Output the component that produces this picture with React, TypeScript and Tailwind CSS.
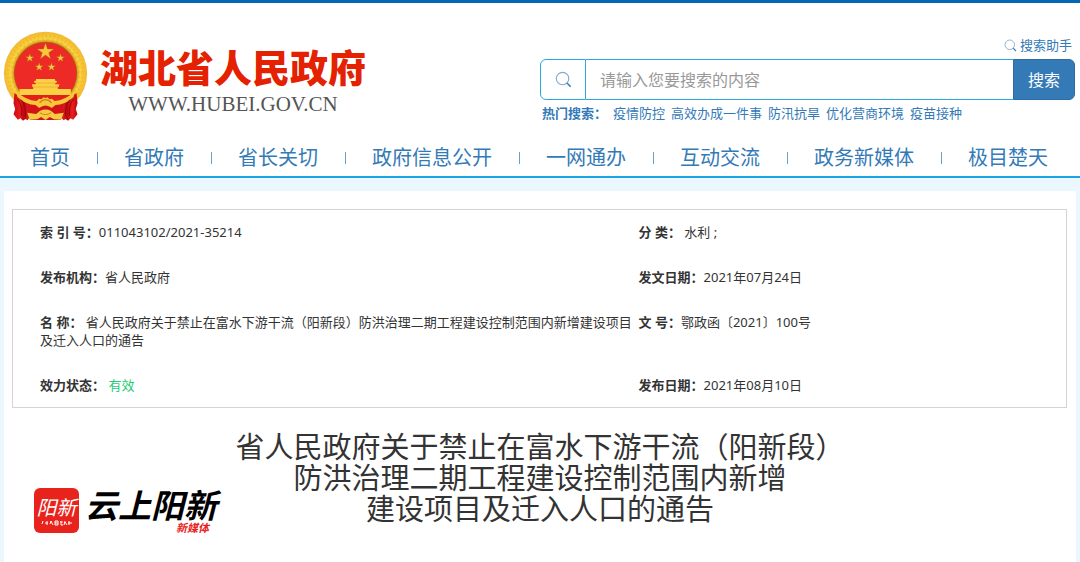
import React from "react";

const NAV = ["首页", "省政府", "省长关切", "政府信息公开", "一网通办", "互动交流", "政务新媒体", "极目楚天"];
const HOT = ["疫情防控", "高效办成一件事", "防汛抗旱", "优化营商环境", "疫苗接种"];

type Field = { label: string; value: string; valid?: boolean };

const FIELDS: Field[] = [
  { label: "索 引 号：", value: "011043102/2021-35214" },
  { label: "分 类：", value: " 水利 ;" },
  { label: "发布机构：", value: "省人民政府" },
  { label: "发文日期：", value: "2021年07月24日" },
  {
    label: "名 称：",
    value: " 省人民政府关于禁止在富水下游干流（阳新段）防洪治理二期工程建设控制范围内新增建设项目及迁入人口的通告",
  },
  { label: "文 号：", value: "鄂政函〔2021〕100号" },
  { label: "效力状态：", value: " 有效", valid: true },
  { label: "发布日期：", value: "2021年08月10日" },
];

function starPoints(cx: number, cy: number, r: number) {
  return Array.from({ length: 10 }, (_, i) => {
    const radius = i % 2 ? r * 0.39 : r;
    const a = (Math.PI / 5) * i - Math.PI / 2;
    return `${cx + radius * Math.cos(a)},${cy + radius * Math.sin(a)}`;
  }).join(" ");
}

function Emblem() {
  return (
    <svg viewBox="9 31 254 270" className="h-[90px] w-[85px] shrink-0" aria-hidden="true">
      <defs>
        <radialGradient id="ring" gradientUnits="userSpaceOnUse" cx="136" cy="158" r="126">
          <stop offset="0.74" stopColor="#d99a1c" />
          <stop offset="0.84" stopColor="#f8cf3c" />
          <stop offset="0.93" stopColor="#f6c030" />
          <stop offset="1" stopColor="#f0b83a" />
        </radialGradient>
        <linearGradient id="drape" x1="0" x2="1" y1="0" y2="0">
          <stop offset="0" stopColor="#c80d12" />
          <stop offset="0.3" stopColor="#e81c1c" />
          <stop offset="0.5" stopColor="#b8080e" />
          <stop offset="0.75" stopColor="#ea2020" />
          <stop offset="1" stopColor="#b8080e" />
        </linearGradient>
      </defs>
      <circle cx="136" cy="158" r="125" fill="url(#ring)" />
      <circle cx="136" cy="158" r="112" fill="none" stroke="#dda025" strokeWidth="9" strokeDasharray="3 9" opacity="0.4" />
      <circle cx="136" cy="158" r="103" fill="none" stroke="#ffe46a" strokeWidth="6" strokeDasharray="8 7" opacity="0.4" />
      <circle cx="136" cy="158" r="95" fill="#a76515" />
      <circle cx="136" cy="159" r="93" fill="#ed2a25" />
      <g fill="#f8c83c" stroke="#a9661a" strokeWidth="1">
        <polygon points={starPoints(136, 93, 26)} />
        <polygon points={starPoints(89, 112, 13)} />
        <polygon points={starPoints(181, 112, 13)} />
        <polygon points={starPoints(117, 139, 13)} />
        <polygon points={starPoints(154, 139, 13)} />
      </g>
      <path d="M108 175h56l2 6h5l-3 6h-3v4h13l-3 8h-2v6h39v17l-10 3H70l-12-3v-17h41v-6h-2l-2-8h12v-4h-3l-3-6h5z" fill="#fbd044" />
      <path d="M105 187h61M97 199h78" stroke="#d9962a" strokeWidth="1.5" />
      <path d="M60 223q31 28 76 29q45-1 76-29z" fill="#e31f1c" />
      <path d="M43 218 Q73 231 92 250 L103 272 Q91 286 82 299 L76 295 68 300 61 293 53 297 40 281 45 265 40 248z" fill="url(#drape)" />
      <path d="M229 218 Q199 231 180 250 L169 272 Q181 286 190 299 L196 295 204 300 211 293 219 297 232 281 227 265 232 248z" fill="url(#drape)" />
      <path d="M82 249q54-16 108 0v31l-8 18H90l-8-18z" fill="#d31317" />
      <path d="M47 213q31 25 62 28l8-7 7 2 6-6 6 2 6-2 6 6 7-2 8 7q31-3 62-28l-5 16q-26 24-54 24l-11 9q-19-15-38 0l-11-9q-28 0-54-24z" fill="#f7c639" />
      <path d="M118 246q18-18 36 0" fill="none" stroke="#c88018" strokeWidth="4" />
      <path d="M81 276l27 4 12-10q16-7 32 0l12 10 27-4-8 21-22-1-12-7-13 9-13-9-12 7-22 1z" fill="#f5cb42" />
      <path d="M119 276q17 12 34 0" fill="none" stroke="#c98918" strokeWidth="3" />
      <path d="M51 235q17 18 13 50M63 237q16 20 13 51M221 235q-17 18-13 50M209 237q-16 20-13 51" fill="none" stroke="#98060b" strokeWidth="3" />
    </svg>
  );
}

function Magnifier({ className }: { className: string }) {
  return (
    <svg viewBox="0 0 18 18" className={className} fill="none" aria-hidden="true">
      <circle cx="8" cy="8" r="6.6" stroke="#88a7cf" strokeWidth="1.2" />
      <path d="M12.7 12.7 16.6 16.6" stroke="#337ab7" strokeWidth="1.6" />
    </svg>
  );
}

function Watermark() {
  return (
    <div className="absolute bottom-[29px] left-[30px] flex gap-[6px]">
      <div className="flex size-[45px] flex-col items-center justify-center rounded-md bg-[#e8231c] text-white">
        <span className="font-['Liberation_Serif','Noto_Sans_CJK_SC',serif] text-xl leading-6 italic">阳新</span>
        <svg viewBox="0 0 32 6" className="h-[6px] w-8" aria-hidden="true">
          <path
            d="M2 1 1 4M4 3h3M6 1v4M9 4l1-3 2 4M14 1h3v4h-3zM14 3h3M19 2h3M20 1v4h2M24 1l-1 4M24 2l2 3M28 1v4M27 3h4"
            stroke="white"
            strokeWidth="1"
            fill="none"
          />
        </svg>
      </div>
      <div className="flex flex-col text-black">
        <span className="text-[33px] leading-[35px] font-bold italic">云上阳新</span>
        <span className="pr-2 text-right text-[11px] leading-[10px] font-bold text-[#e8231c] italic">新媒体</span>
      </div>
    </div>
  );
}

export default function App() {
  return (
    <div
      lang="zh-CN"
      className="flex min-h-screen flex-col bg-[#ebf7ff] font-['Noto_Sans','Noto_Sans_CJK_SC',sans-serif] text-[#333]"
    >
      <header className="border-t-3 border-b-2 border-t-[#0068b7] border-b-[#1ba3e6] bg-white">
        <div className="flex items-start justify-between pr-[5px] pl-[3px]">
          <a href="#home" className="flex gap-3 pt-7">
            <Emblem />
            <span className="flex flex-col items-center pt-4">
              <span className="text-[38px] leading-[40px] font-black text-[#e42100]">湖北省人民政府</span>
              <span className="font-['Liberation_Serif',serif] text-[21px] leading-[34px] text-[#555]">
                WWW.HUBEI.GOV.CN
              </span>
            </span>
          </a>
          <div className="w-[535px] pt-8 text-[#337ab7]">
            <div className="flex justify-end pr-[3px]">
              <a href="#helper" className="flex items-center gap-[3px] text-[13px] leading-5">
                <Magnifier className="size-[13px]" />
                搜索助手
              </a>
            </div>
            <form className="mt-1 flex h-[41px]" onSubmit={(e) => e.preventDefault()}>
              <label
                htmlFor="query"
                aria-label="搜索"
                className="flex w-[46px] items-center justify-center rounded-l-md border border-[#29a9e0]"
              >
                <Magnifier className="size-[17px]" />
              </label>
              <input
                id="query"
                type="text"
                placeholder="请输入您要搜索的内容"
                className="min-w-0 flex-1 border-y border-[#29a9e0] px-[14px] text-base text-[#333] outline-none placeholder:text-[#999]"
              />
              <button type="submit" className="w-[62px] rounded-r-md border border-[#2e6da4] bg-[#337ab7] text-base text-white">
                搜索
              </button>
            </form>
            <div className="flex gap-[6px] pt-[3px] pl-[2px] text-[13px] leading-5">
              <strong>热门搜索：</strong>
              {HOT.map((item) => (
                <a key={item} href="#hot">
                  {item}
                </a>
              ))}
            </div>
          </div>
        </div>
        <nav className="flex items-center justify-between pt-5 pr-8 pb-1 pl-[30px] text-xl leading-[29px] text-[#337ab7]">
          {NAV.map((item, i) => (
            <React.Fragment key={item}>
              {i > 0 && <span className="h-3 w-px bg-[#6a9fcd]" />}
              <a href="#nav">{item}</a>
            </React.Fragment>
          ))}
        </nav>
      </header>

      <main className="mx-1 mt-[13px] flex-1 bg-white pt-[18px]">
        <dl className="mr-[9px] ml-2 grid grid-cols-[7fr_5fr] gap-y-[27px] border border-[#d4d4d4] py-[13px] pl-[27px] text-[13px] leading-[18px]">
          {FIELDS.map((f) => (
            <div key={f.label}>
              <dt className="inline font-bold">{f.label}</dt>
              <dd className={f.valid ? "inline text-[#1fcc78]" : "inline"}>{f.value}</dd>
            </div>
          ))}
        </dl>
        <section className="relative pt-[23px] pb-[38px]">
          <h1 className="text-center text-[29px] leading-[31px]">
            省人民政府关于禁止在富水下游干流（阳新段）
            <br />
            防洪治理二期工程建设控制范围内新增
            <br />
            建设项目及迁入人口的通告
          </h1>
          <Watermark />
        </section>
      </main>
    </div>
  );
}
